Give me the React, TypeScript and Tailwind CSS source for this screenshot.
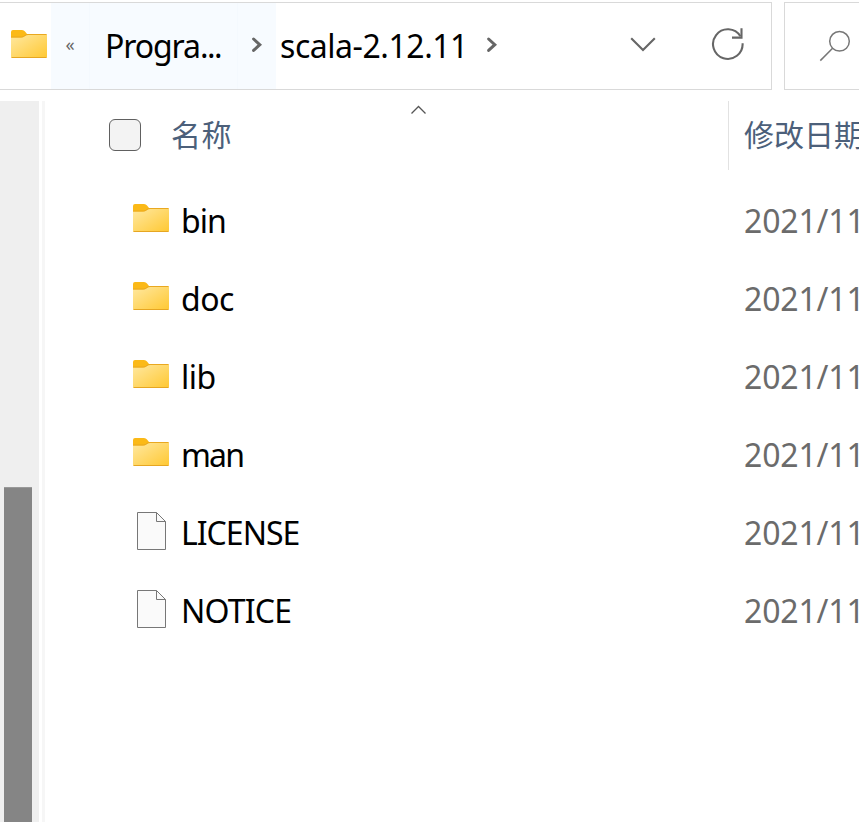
import type { ReactNode } from "react";

function FolderIcon({ id }: { id: string }) {
  return (
    <svg width="36" height="28" viewBox="0 0 36 28" className="block shrink-0">
      <defs>
        <linearGradient id={id} x1="0" y1="0" x2="1" y2="1">
          <stop offset="0" stopColor="#ffe8a0" />
          <stop offset="1" stopColor="#ffc832" />
        </linearGradient>
      </defs>
      <path d="M0 2Q0 0 2 0H11Q13 0 14 1.5L16 4H34.5Q36 4 36 5.5V10H0Z" fill="#fbb917" />
      <path d="M0 7.6H10Q12 7.6 13.5 6.2Q15 5 17 5H36V26.5Q36 28 34.5 28H1.5Q0 28 0 26.5Z" fill={`url(#${id})`} />
      <path d="M0 7H10.5Q12.5 7 14 5.5Q15.2 4.5 17 4.5H35.5" fill="none" stroke="#e9a820" strokeWidth="1" />
      <path d="M.5 27.5H35.5" stroke="#e6a622" strokeWidth="1" />
    </svg>
  );
}

function FileIcon() {
  return (
    <svg width="29" height="38" viewBox="0 0 29 38" className="block shrink-0">
      <path d="M.5 .5H19.5L28.5 9.5V37.5H.5Z" fill="#fafafa" stroke="#777" />
      <path d="M19.5 .5V9.5H28.5" fill="none" stroke="#777" />
    </svg>
  );
}

function Chevron() {
  return (
    <svg width="12" height="18" viewBox="0 0 12 18" className="block shrink-0">
      <path d="M2.6 3L8.8 8.7L2.6 14.4" fill="none" stroke="#666" strokeWidth="3" strokeLinecap="round" strokeLinejoin="miter" />
    </svg>
  );
}

function Row({ icon, label, folder, tracking }: { icon: ReactNode; label: string; folder: boolean; tracking: string }) {
  return (
    <div className="flex h-[78px] items-center">
      <div className={folder ? "flex w-[136px] shrink-0 pb-[4px] pl-[88px]" : "flex w-[136px] shrink-0 pb-[2px] pl-[92px]"}>{icon}</div>
      <div className={`w-[563px] shrink-0 pt-[2px] leading-[44px] text-black ${tracking}`}>{label}</div>
      <div className="shrink-0 whitespace-nowrap pt-[2px] leading-[44px] tracking-[-0.15px] text-[#6b6b6b]">2021/11</div>
    </div>
  );
}

const rows = [
  { label: "bin", folder: true, tracking: "tracking-[-1px]" },
  { label: "doc", folder: true, tracking: "tracking-[-0.5px]" },
  { label: "lib", folder: true, tracking: "tracking-[-0.5px]" },
  { label: "man", folder: true, tracking: "tracking-[-1.8px]" },
  { label: "LICENSE", folder: false, tracking: "tracking-[-1px]" },
  { label: "NOTICE", folder: false, tracking: "tracking-[-0.8px]" },
];

export default function App() {
  return (
    <div className="flex h-[822px] w-[859px] flex-col overflow-hidden bg-white pt-[2px] font-['Noto_Sans','Noto_Sans_CJK_SC',sans-serif] text-[32px]">
      <header className="flex h-[88px] shrink-0 gap-[12px]">
        <div className="flex w-[772px] shrink-0 border border-l-0 border-[#d9d9d9]">
          <div className="flex w-[51px] shrink-0 pl-[11px] pt-[27px]">
            <FolderIcon id="address-folder" />
          </div>
          <div className="flex w-[39px] shrink-0 items-center justify-center border-r border-[#f4f9fe] bg-[#f7fbff] pb-[5px] text-[18px] leading-none text-[#666]">«</div>
          <div className="w-[148px] shrink-0 whitespace-nowrap border-r border-[#f4f9fe] bg-[#f7fbff] pl-[15px] pt-[21px] leading-[44px] tracking-[-1.1px] text-black">
            Progra<span className="tracking-[-1.5px]">...</span>
          </div>
          <div className="flex w-[38px] shrink-0 bg-[#f7fbff] pl-[13px] pt-[33px]">
            <Chevron />
          </div>
          <div className="w-[210px] shrink-0 whitespace-nowrap pl-[4px] pt-[21px] leading-[44px] tracking-[-0.45px] text-black">scala-2.12.11</div>
          <div className="w-[144px] shrink-0 pt-[33px]">
            <Chevron />
          </div>
          <svg width="26" height="16" viewBox="0 0 26 16" className="mt-[33px] block shrink-0">
            <path d="M1.2 2.2L13 14L24.8 2.2" fill="none" stroke="#666" strokeWidth="2.1" />
          </svg>
          <svg width="34" height="34" viewBox="0 0 34 34" className="ml-[55px] mt-[24px] block shrink-0">
            <path d="M31.6 16.3A14.8 14.8 0 1 1 29.4 9.3" fill="none" stroke="#666" strokeWidth="2.1" />
            <path d="M30.5 1.2V10.6H21" fill="none" stroke="#666" strokeWidth="2.1" />
          </svg>
        </div>
        <div className="flex w-[90px] shrink-0 border border-[#d9d9d9] pl-[34px] pt-[27px]">
          <svg width="32" height="32" viewBox="0 0 32 32" className="block shrink-0">
            <circle cx="20.5" cy="11.3" r="9.8" fill="none" stroke="#777" strokeWidth="1.5" />
            <path d="M13.6 18.3L1.3 30.6" stroke="#777" strokeWidth="1.5" />
          </svg>
        </div>
      </header>
      <main className="mt-[11px] flex min-h-0 grow">
        <div className="w-[39px] shrink-0 bg-[#efefef] pl-[4px] pt-[386px]">
          <div className="h-[335px] w-[28px] border-t border-[#999] bg-[#858585]" />
        </div>
        <div className="ml-[3px] w-[3px] shrink-0 bg-[#f6f6f6]" />
        <section className="w-[814px] shrink-0">
          <div className="flex h-[69px] text-[30px] text-[#4c607a]">
            <div className="ml-[64px] mt-[18px] h-[32px] w-[32px] shrink-0 rounded-[6px] border border-[#606060] bg-[#f3f3f3]" />
            <div className="ml-[30px] w-[238px] shrink-0 pt-[10px] font-['Noto_Sans_CJK_SC',sans-serif] leading-[44px] tracking-[0.5px]">名称</div>
            <svg width="18" height="10" viewBox="0 0 18 10" className="ml-px mt-[4px] block shrink-0">
              <path d="M1.5 8.5L8.5 1.5L15.5 8.5" fill="none" stroke="#555" strokeWidth="1.3" />
            </svg>
            <div className="ml-[300px] w-px shrink-0 bg-[#e2e2e2]" />
            <div className="ml-[15px] shrink-0 whitespace-nowrap pt-[10px] font-['Noto_Sans_CJK_SC',sans-serif] leading-[44px]">修改日期</div>
          </div>
          <div className="pt-[11px]">
            {rows.map((r) => (
              <Row key={r.label} label={r.label} folder={r.folder} tracking={r.tracking} icon={r.folder ? <FolderIcon id={`folder-${r.label}`} /> : <FileIcon />} />
            ))}
          </div>
        </section>
      </main>
    </div>
  );
}
